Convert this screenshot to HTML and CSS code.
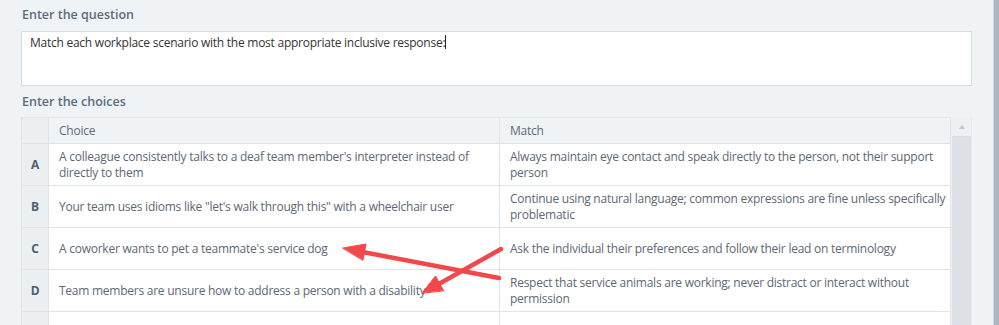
FILE: index.html
```html
<!DOCTYPE html>
<html lang="en">
<head>
    <meta charset="UTF-8">
    <title>Matching question editor</title>
    <link rel="stylesheet" href="styles.css">
</head>
<body>
    <div class="frame">
        <div class="editor">
            <!-- Question -->
            <label class="field-label">Enter the question</label>
            <div class="question-box">Match each workplace scenario with the most appropriate inclusive response:<span class="caret"></span></div>

            <!-- Choices grid -->
            <label class="field-label second">Enter the choices</label>
            <div class="grid-wrap">
                <table class="grid">
                    <colgroup>
                        <col class="col-key">
                        <col class="col-choice">
                        <col class="col-match">
                    </colgroup>
                    <thead>
                        <tr>
                            <th class="key"></th>
                            <th>Choice</th>
                            <th>Match</th>
                        </tr>
                    </thead>
                    <tbody>
                        <tr>
                            <td class="key">A</td>
                            <td>A colleague consistently talks to a deaf team member's interpreter instead of<br>directly to them</td>
                            <td>Always maintain eye contact and speak directly to the person, not their support<br>person</td>
                        </tr>
                        <tr>
                            <td class="key">B</td>
                            <td>Your team uses idioms like "let's walk through this" with a wheelchair user</td>
                            <td>Continue using natural language; common expressions are fine unless specifically<br>problematic</td>
                        </tr>
                        <tr>
                            <td class="key">C</td>
                            <td>A coworker wants to pet a teammate's service dog</td>
                            <td>Ask the individual their preferences and follow their lead on terminology</td>
                        </tr>
                        <tr>
                            <td class="key">D</td>
                            <td>Team members are unsure how to address a person with a disability</td>
                            <td>Respect that service animals are working; never distract or interact without<br>permission</td>
                        </tr>
                        <tr>
                            <td class="key"></td>
                            <td></td>
                            <td></td>
                        </tr>
                    </tbody>
                </table>
                <div class="scroll">
                    <div class="scroll-up"><span class="tri"></span></div>
                    <div class="scroll-track"></div>
                </div>
            </div>
        </div>
        <div class="page-scroll"></div>
    </div>

    <!-- annotation arrows -->
    <svg class="arrows" width="999" height="325" viewBox="0 0 999 325">
        <g stroke="#f2474b" stroke-width="4.5" stroke-linecap="round" fill="#f2474b">
            <line x1="499" y1="278" x2="360" y2="251.5"/>
            <polygon points="343,248 366,244 363,260" stroke-width="1" stroke-linejoin="round"/>
            <line x1="501" y1="249" x2="437" y2="285"/>
            <polygon points="422,293 435.5,276 443.5,290.5" stroke-width="1" stroke-linejoin="round"/>
        </g>
    </svg>
</body>
</html>
```

FILE: styles.css
```css
* {
    margin: 0;
    padding: 0;
    box-sizing: border-box;
}

body {
    font-family: 'Open Sans', 'Noto Sans', sans-serif;
    font-size: 12px;
    letter-spacing: -0.25px;
    background: #eff3f6;
    color: #5d6873;
    overflow: hidden;
    height: 325px;
    position: relative;
}

.frame {
    display: flex;
    height: 325px;
}

.editor {
    flex: 1;
    padding: 6px 21px 0 21px;
}

.page-scroll {
    width: 7px;
    background: #adb6be;
    border-left: 1px solid #d3d9de;
}

/* Labels */
.field-label {
    display: block;
    font-size: 12.5px;
    font-weight: 600;
    letter-spacing: 0;
    line-height: 18px;
    color: #5e6c7a;
    margin-bottom: 7px;
    padding-left: 1px;
}

.field-label.second {
    margin-top: 7px;
    margin-bottom: 6px;
}

/* Question box */
.question-box {
    height: 55px;
    background: #fff;
    border: 1px solid #d6dde3;
    padding: 2px 8px;
    line-height: 18px;
    color: #333;
}

.caret {
    display: inline-block;
    width: 1px;
    height: 14px;
    background: #222;
    vertical-align: -2px;
}

/* Choices grid */
.grid-wrap {
    display: flex;
    align-items: flex-start;
}

.grid {
    width: 929px;
    border-collapse: collapse;
    table-layout: fixed;
    background: #fff;
}

.col-key { width: 27px; }
.col-choice { width: 451px; }
.col-match { width: 451px; }

.grid th,
.grid td {
    border: 1px solid #dfe4e9;
    text-align: left;
    vertical-align: middle;
    padding: 0 10px;
    line-height: 16px;
    white-space: nowrap;
}

.grid th {
    height: 26px;
    background: #f0f3f6;
    font-weight: normal;
    color: #5f6b77;
}

.grid td {
    height: 42px;
}

.grid .key {
    background: #eceff2;
    padding: 0;
    text-align: center;
    font-weight: 700;
    color: #4e5e6e;
}

.grid tr:first-child th {
    border-top-color: #e3e8ec;
}

/* inner scrollbar */
.scroll {
    width: 21px;
    display: flex;
    flex-direction: column;
    height: 210px;
    background: #dde1e5;
    border-left: 1px solid #eef1f4;
    border-right: 1px solid #e6eaed;
}

.scroll-up {
    height: 20px;
    background: #eef1f4;
    border-bottom: 1px solid #d9dee2;
    display: flex;
    align-items: center;
    justify-content: center;
}

.tri {
    width: 0;
    height: 0;
    border-left: 3px solid transparent;
    border-right: 3px solid transparent;
    border-bottom: 4px solid #c0c7cd;
}

.scroll-track {
    flex: 1;
}

/* annotation overlay */
.arrows {
    position: absolute;
    top: 0;
    left: 0;
    pointer-events: none;
}
```
